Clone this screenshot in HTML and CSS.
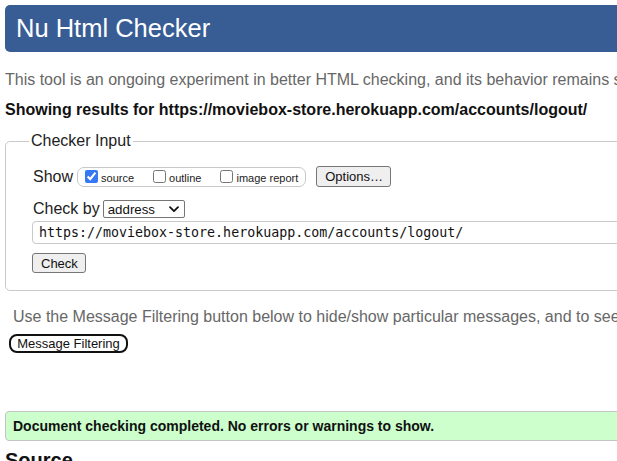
FILE: index.html
```html
<!DOCTYPE html>
<html lang="en">
<head>
<meta charset="utf-8">
<title>Nu Html Checker</title>
<link rel="stylesheet" href="styles.css">
</head>
<body>
<div class="page">
  <h1 class="banner">Nu Html Checker</h1>
  <p class="intro">This tool is an ongoing experiment in better HTML checking, and its behavior remains subject to change</p>
  <p class="showing">Showing results for https://moviebox-store.herokuapp.com/accounts/logout/</p>

  <fieldset class="checker">
    <legend>Checker Input</legend>
    <div class="row row-show">
      <span class="label">Show</span>
      <span class="group">
        <label class="opt"><input type="checkbox" checked><span>source</span></label>
        <label class="opt"><input type="checkbox"><span>outline</span></label>
        <label class="opt"><input type="checkbox"><span>image report</span></label>
      </span>
      <button class="btn btn-options" type="button">Options…</button>
    </div>
    <div class="row row-by">
      <span class="label">Check by</span>
      <span class="select-wrap">
        <select class="select"><option>address</option></select>
        <svg class="chev" width="10" height="7" viewBox="0 0 10 7"><path d="M1 1.2 L5 5.2 L9 1.2" fill="none" stroke="#111" stroke-width="1.8" stroke-linecap="round" stroke-linejoin="round"/></svg>
      </span>
    </div>
    <input class="url" type="text" value="https://moviebox-store.herokuapp.com/accounts/logout/">
    <button class="btn btn-check" type="button">Check</button>
  </fieldset>

  <p class="filter-note">Use the Message Filtering button below to hide/show particular messages, and to see total counts of errors and warnings.</p>
  <button class="btn-filter" type="button">Message Filtering</button>

  <p class="success">Document checking completed. No errors or warnings to show.</p>
  <h2 class="source">Source</h2>
</div>
</body>
</html>
```

FILE: styles.css
```css
html {
  overflow: hidden;
}
body {
  margin: 0;
  background: #fff;
  font-family: "Liberation Sans", Arial, sans-serif;
  color: #111;
}
.page {
  width: 1000px;
  padding: 5px;
}
.banner {
  margin: 0;
  height: 47px;
  display: flex;
  align-items: center;
  padding-left: 11px;
  background: #385d95;
  color: #fff;
  border-radius: 5px;
  font-size: 25.5px;
  font-weight: normal;
}
.intro {
  margin: 19px 0 0;
  font-size: 16px;
  line-height: 18px;
  color: #676767;
  white-space: nowrap;
}
.showing {
  margin: 12px 0 0;
  font-size: 16px;
  line-height: 18px;
  font-weight: bold;
  color: #111;
  white-space: nowrap;
}
.checker {
  margin: 13px 0 0;
  padding: 16px 0 17px 27px;
  border: 1px solid #c9c9c9;
  border-radius: 5px;
  min-width: 0;
}
.checker legend {
  margin-left: -4px;
  padding: 0 2px;
  font-size: 16px;
  line-height: 18px;
  color: #222;
}
.row {
  display: flex;
  align-items: center;
}
.row-show {
  height: 21px;
}
.label {
  font-size: 16px;
  line-height: 18px;
  color: #222;
}
.group {
  margin-left: 4px;
  height: 20px;
  box-sizing: border-box;
  border: 1px solid #c8c8c8;
  border-radius: 7px;
  padding: 0 7px;
  display: flex;
  align-items: center;
  gap: 19px;
}
.opt {
  display: flex;
  align-items: center;
  gap: 3px;
  font-size: 11px;
  color: #222;
}
.opt input {
  margin: 0;
  width: 13px;
  height: 13px;
  accent-color: #3478f6;
}
.opt span {
  padding-top: 3px;
}
.btn {
  font-family: "Liberation Sans", Arial, sans-serif;
  font-size: 13px;
  color: #111;
  background: #efefef;
  border: 1px solid #767676;
  border-radius: 3px;
  padding: 0 8px;
  box-sizing: border-box;
}
.btn-options {
  margin-left: 10px;
  height: 21px;
  width: 75px;
}
.row-by {
  margin-top: 13px;
  height: 18px;
}
.select-wrap {
  position: relative;
  margin-left: 3px;
  display: inline-block;
}
.select {
  appearance: none;
  -webkit-appearance: none;
  width: 82px;
  height: 18px;
  box-sizing: border-box;
  border: 1px solid #767676;
  border-radius: 2px;
  background: #fff;
  padding: 0 0 0 4px;
  font-family: "Liberation Sans", Arial, sans-serif;
  font-size: 13.3px;
  color: #111;
}
.chev {
  position: absolute;
  right: 6px;
  top: 6px;
  pointer-events: none;
}
.url {
  display: block;
  margin: 3px 0 0 -1px;
  width: 700px;
  height: 23px;
  box-sizing: border-box;
  border: 1px solid #c9c9c9;
  border-radius: 4px;
  padding: 0 0 0 6px;
  font-family: "DejaVu Sans Mono", "Liberation Mono", monospace;
  font-size: 13.3px;
  color: #111;
}
.btn-check {
  display: block;
  margin: 9px 0 0 -1px;
  width: 54px;
  height: 20px;
}
.filter-note {
  margin: 17px 0 0;
  padding-left: 8px;
  font-size: 16px;
  line-height: 18px;
  color: #676767;
  white-space: nowrap;
}
.btn-filter {
  display: block;
  margin: 8px 0 0 4px;
  height: 19px;
  width: 119px;
  box-sizing: border-box;
  padding: 0;
  background: #fff;
  border: 2px solid #111;
  border-radius: 8px;
  font-family: "Liberation Sans", Arial, sans-serif;
  font-size: 13px;
  color: #111;
}
.success {
  margin: 58px 0 0;
  height: 30px;
  box-sizing: border-box;
  display: flex;
  align-items: center;
  padding-left: 7px;
  background: #ccffcc;
  border: 1px solid #c4c4c4;
  border-radius: 4px;
  font-size: 14px;
  font-weight: bold;
  color: #111;
}
.source {
  margin: 7px 0 0;
  font-size: 20px;
  line-height: 24px;
  font-weight: bold;
  color: #111;
}
```
